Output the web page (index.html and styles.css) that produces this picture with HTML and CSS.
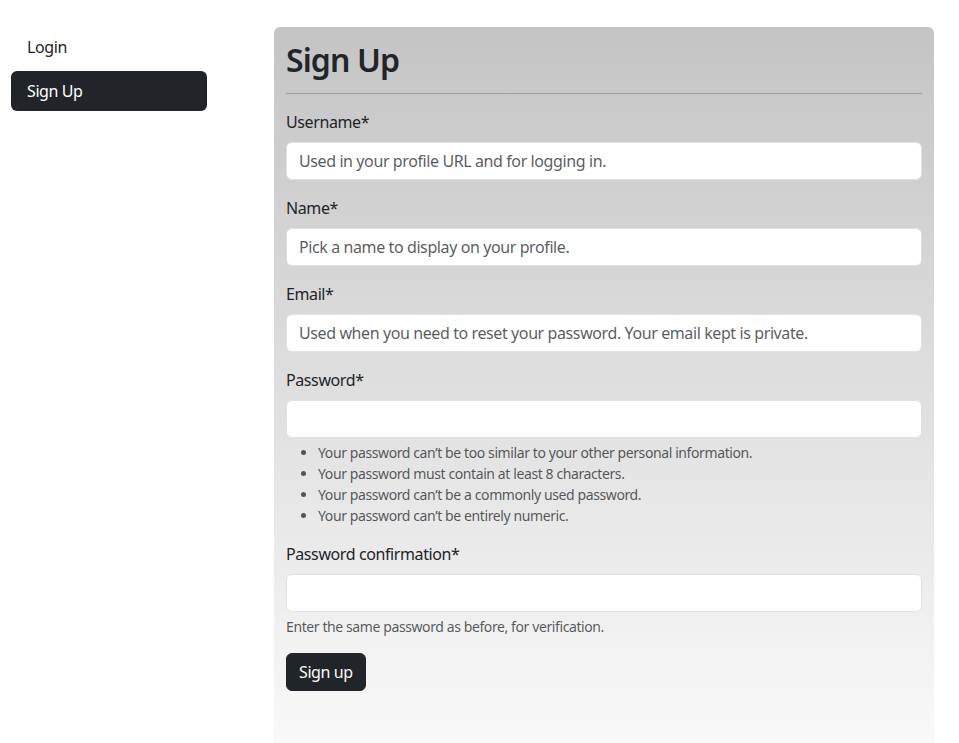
FILE: index.html
```html
<!DOCTYPE html>
<html lang="en">
<head>
<meta charset="utf-8">
<title>Sign Up</title>
<link rel="stylesheet" href="styles.css">
</head>
<body>
<div class="layout">
  <nav class="sidenav">
    <a class="nav-link" href="#">Login</a>
    <a class="nav-link active" href="#">Sign Up</a>
  </nav>
  <main class="card">
    <h1 class="title">Sign Up</h1>
    <hr class="divider">
    <form class="form">
      <div class="field">
        <label class="label" for="u">Username*</label>
        <input class="input" id="u" type="text" placeholder="Used in your profile URL and for logging in.">
      </div>
      <div class="field">
        <label class="label" for="n">Name*</label>
        <input class="input" id="n" type="text" placeholder="Pick a name to display on your profile.">
      </div>
      <div class="field">
        <label class="label" for="e">Email*</label>
        <input class="input" id="e" type="email" placeholder="Used when you need to reset your password. Your email kept is private.">
      </div>
      <div class="field">
        <label class="label" for="p1">Password*</label>
        <input class="input" id="p1" type="password">
        <ul class="help-list">
          <li>Your password can’t be too similar to your other personal information.</li>
          <li>Your password must contain at least 8 characters.</li>
          <li>Your password can’t be a commonly used password.</li>
          <li>Your password can’t be entirely numeric.</li>
        </ul>
      </div>
      <div class="field">
        <label class="label" for="p2">Password confirmation*</label>
        <input class="input" id="p2" type="password">
        <div class="help">Enter the same password as before, for verification.</div>
      </div>
      <button class="btn" type="button">Sign up</button>
    </form>
  </main>
</div>
</body>
</html>
```
FILE: styles.css
```css
* { box-sizing: border-box; }
html, body { margin: 0; padding: 0; }
body {
  font-family: "Noto Sans", "Open Sans", sans-serif;
  font-size: 16px;
  line-height: 1.5;
  letter-spacing: -0.4px;
  color: #212529;
  background: #fff;
}
.layout {
  display: flex;
  align-items: flex-start;
  padding: 27px 25px 0 11px;
  gap: 67px;
}
.sidenav {
  width: 196px;
  flex: none;
  display: flex;
  flex-direction: column;
  gap: 4px;
}
.nav-link {
  display: block;
  padding: 8px 16px;
  color: #212529;
  text-decoration: none;
  border-radius: 6px;
}
.nav-link.active {
  background: #212529;
  color: #fff;
}
.card {
  flex: 1;
  min-height: calc(100vh - 27px);
  padding: 12px 12px 40px;
  border-radius: 6px 6px 0 0;
  background: linear-gradient(to bottom, #c4c4c4 0%, #f9f9f9 100%);
}
.title {
  margin: 2px 0 0;
  font-size: 32px;
  font-weight: 600;
  line-height: 1.2;
  letter-spacing: -0.9px;
}
.divider {
  margin: 14px 0 16px;
  border: 0;
  border-top: 1px solid rgba(33, 37, 41, 0.25);
}
.form { display: flex; flex-direction: column; align-items: flex-start; }
.field { width: 100%; margin-bottom: 16px; }
.label { display: block; margin-bottom: 8px; }
.input {
  display: block;
  width: 100%;
  height: 38px;
  padding: 6px 12px;
  font: inherit;
  letter-spacing: inherit;
  color: #212529;
  background: #fff;
  border: 1px solid #dee2e6;
  border-radius: 6px;
  outline: none;
}
.input::placeholder { color: rgba(33, 37, 41, 0.75); }
.help-list {
  margin: 4px 0 0;
  padding-left: 32px;
  font-size: 14px;
  line-height: 21px;
  letter-spacing: -0.4px;
  color: rgba(33, 37, 41, 0.75);
}
.help {
  margin-top: 4px;
  font-size: 14px;
  line-height: 21px;
  letter-spacing: -0.4px;
  color: rgba(33, 37, 41, 0.75);
}
.btn {
  font: inherit;
  letter-spacing: inherit;
  height: 38px;
  padding: 6px 12px;
  color: #fff;
  background: #212529;
  border: 1px solid #212529;
  border-radius: 6px;
}
```
